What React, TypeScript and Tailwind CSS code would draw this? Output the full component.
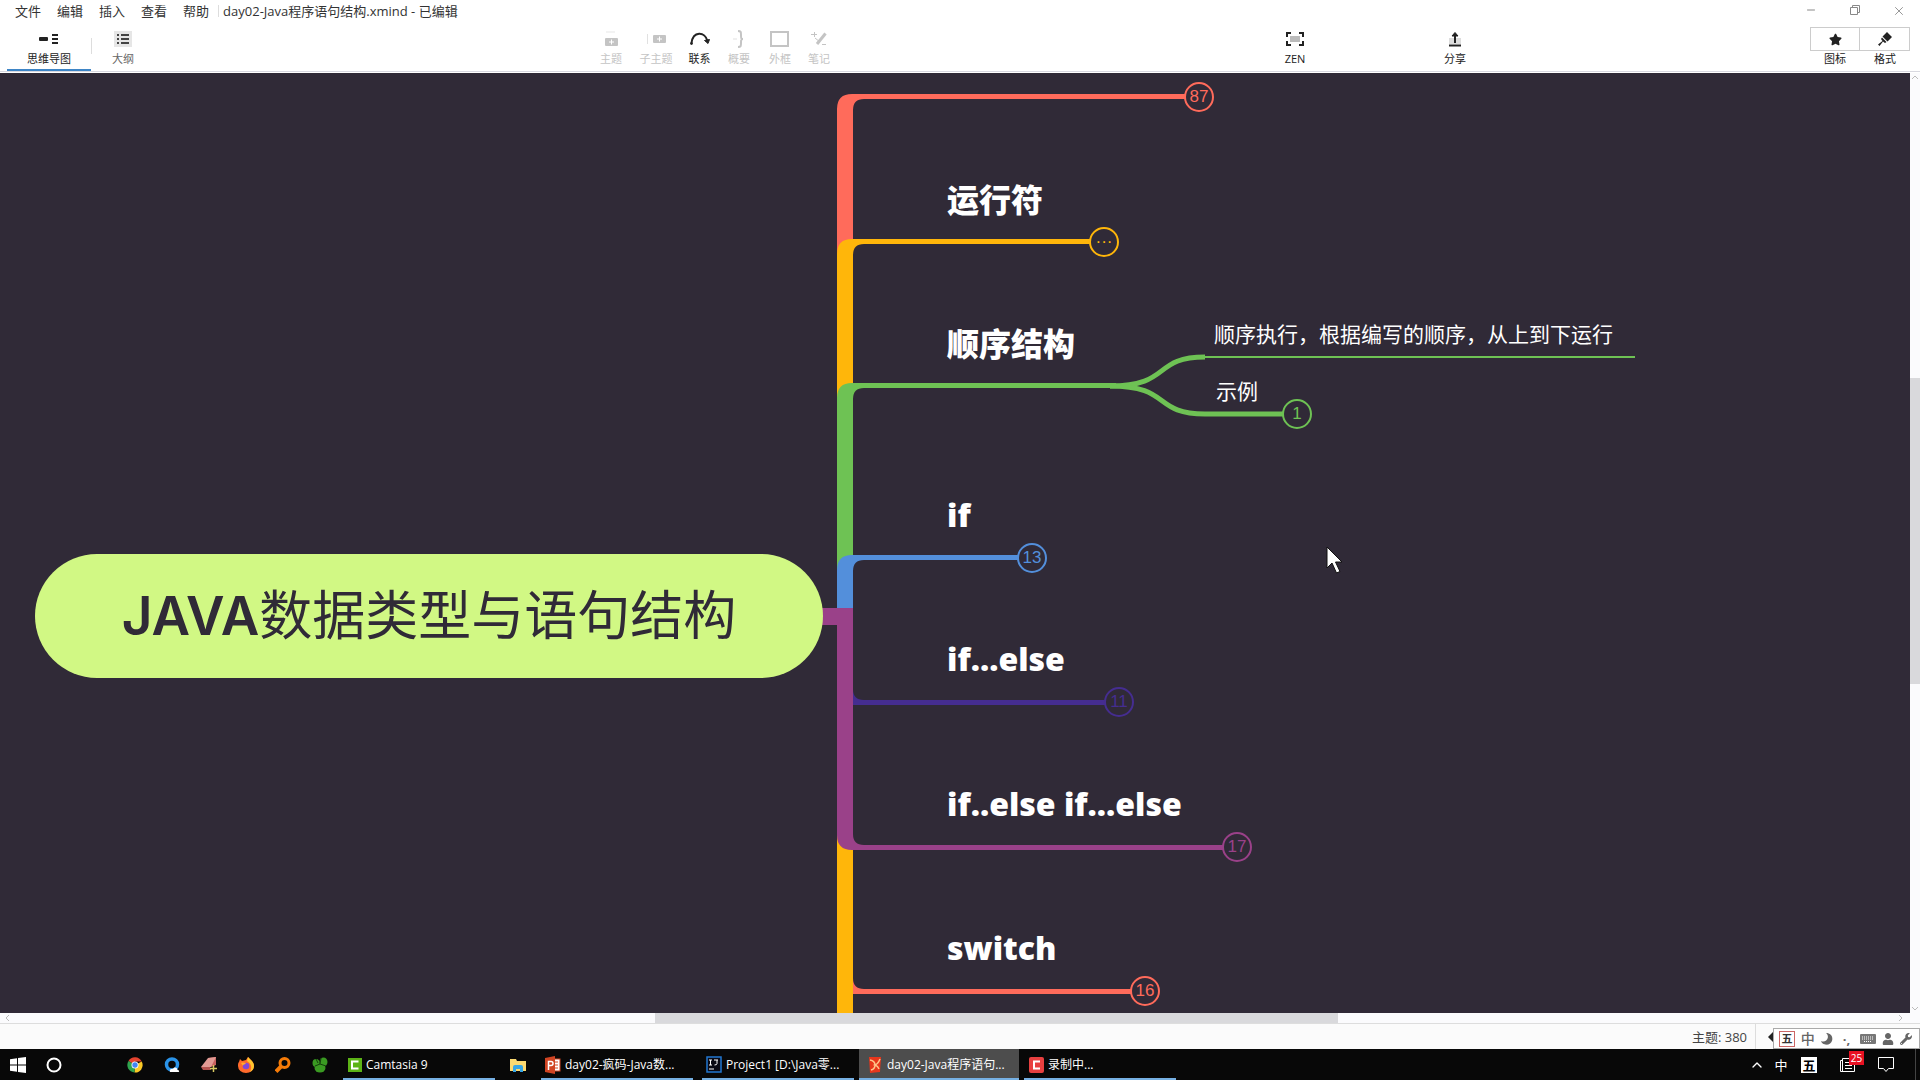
import type { ReactNode } from "react";
import { ChevronUp, Minus, X } from "lucide-react";
import { FaStar, FaWrench, FaUser, FaMoon } from "react-icons/fa";

const menus = ["文件", "编辑", "插入", "查看", "帮助"];

// y is the middle of the horizontal stroke, end is where the badge starts
const branches = [
  { color: "#ff6b5b", y: 24, end: 1185 },
  { color: "#ffb60a", y: 169, end: 1090 },
  { color: "#6ec254", y: 313, end: 1116 },
  { color: "#538fdb", y: 485, end: 1018 },
  { color: "#ff6b5b", y: 918, end: 1131 },
  { color: "#ffb60a", y: 1062, end: 1131 },
  { color: "#452d90", y: 629, end: 1105 },
  { color: "#9a4189", y: 774, end: 1223 },
];

const topics = [
  { text: "运行符", place: "left-[947px] top-[103px]" },
  { text: "顺序结构", place: "left-[947px] top-[247px]" },
  { text: "if", place: "left-[947px] top-[418px]" },
  { text: "if...else", place: "left-[947px] top-[562px]" },
  { text: "if..else if...else", place: "left-[947px] top-[707px]" },
  { text: "switch", place: "left-[947px] top-[851px]" },
];

const badges = [
  { text: "87", place: "left-[1184px] top-[9px] text-[#ff6b5b]" },
  { text: "···", place: "left-[1089px] top-[154px] text-[#ffb60a]" },
  { text: "1", place: "left-[1282px] top-[326px] text-[#6ec254]" },
  { text: "13", place: "left-[1017px] top-[470px] text-[#538fdb]" },
  { text: "11", place: "left-[1104px] top-[614px] text-[#452d90]" },
  { text: "17", place: "left-[1222px] top-[759px] text-[#9a4189]" },
  { text: "16", place: "left-[1130px] top-[903px] text-[#ff6b5b]" },
];

const ROOT_Y = 543;

function branchPath(y: number, end: number) {
  const dir = y < ROOT_Y ? 1 : -1;
  const outer = y - 3 * dir;
  const inner = y + 2 * dir;
  return `M837 ${ROOT_Y} V${outer + 15 * dir} Q837 ${outer} 852 ${outer} H${end} V${inner} H864 Q853 ${inner} 853 ${inner + 11 * dir} V${ROOT_Y} Z`;
}

function ToolButton({ label, className, children }: { label: string; className: string; children: ReactNode }) {
  return (
    <button className={`flex flex-col items-center h-full pt-[5px] ${className}`}>
      <span className="h-6 flex items-center justify-center">{children}</span>
      <span className="text-[11px] leading-4 whitespace-nowrap">{label}</span>
    </button>
  );
}

function TitleBar() {
  return (
    <header className="h-[22px] shrink-0 flex items-center pl-[15px] text-[13px] leading-4 text-[#333]">
      <nav className="flex gap-4">
        {menus.map((m) => (
          <button key={m}>{m}</button>
        ))}
      </nav>
      <span className="w-px h-3 bg-[#ddd] ml-[9px] mr-1" />
      <h1 className="whitespace-nowrap">day02-Java程序语句结构.xmind - 已编辑</h1>
      <div className="ml-auto flex text-[#888]">
        <button aria-label="最小化" className="w-11 flex justify-center">
          <Minus size={12} strokeWidth={2} />
        </button>
        <button aria-label="还原" className="w-11 flex justify-center">
          <svg width="12" height="12" fill="none" stroke="currentColor">
            <path d="M1.500 3.500h7v7h-7zM3.500 3V1.500h7v7H9" />
          </svg>
        </button>
        <button aria-label="关闭" className="w-[43px] flex justify-center">
          <X size={14} strokeWidth={1.500} />
        </button>
      </div>
    </header>
  );
}

function Toolbar() {
  return (
    <div className="h-[50px] shrink-0 flex border-b border-[#d8d8e0] mb-px pl-[7px] pr-[10px] text-[#222]">
      <ToolButton label="思维导图" className="w-[84px] border-b-2 border-[#3e85c6]">
        <svg width="20" height="12" fill="currentColor">
          <rect x="0" y="4" width="9" height="4" rx="1" />
          <path d="M13 1h6v2h-6zM13 5h6v2h-6zM13 9h6v2h-6z" />
        </svg>
      </ToolButton>
      <span className="w-px h-4 mt-4 bg-[#ddd]" />
      <ToolButton label="大纲" className="w-[62px] text-[#666]">
        <svg width="18" height="16">
          <rect width="18" height="16" fill="#e6e6e6" />
          <path d="M3 3h2v2H3zM7 3h8v2H7zM3 7h2v2H3zM7 7h8v2H7zM3 11h2v2H3zM7 11h8v2H7z" fill="#444" />
        </svg>
      </ToolButton>
      <div className="flex-[434]" />
      <ToolButton label="主题" className="w-[46px] text-[#c4c4c4]">
        <svg width="16" height="18" fill="none" stroke="currentColor">
          <path d="M3 2h9" strokeOpacity=".4" />
          <rect x="2" y="8" width="13" height="8" rx="1" fill="currentColor" stroke="none" />
          <path d="M6 12h5M8.500 9.500v5" stroke="#fff" />
        </svg>
      </ToolButton>
      <ToolButton label="子主题" className="w-[44px] text-[#c4c4c4]">
        <svg width="22" height="16" fill="none" stroke="currentColor">
          <path d="M2.500 3v10" strokeOpacity=".5" />
          <rect x="8" y="4" width="13" height="8" rx="1" fill="currentColor" stroke="none" />
          <path d="M12 8h5M14.500 5.500v5" stroke="#fff" />
        </svg>
      </ToolButton>
      <ToolButton label="联系" className="w-[43px]">
        <svg width="22" height="14" fill="none" stroke="currentColor" strokeWidth="2">
          <path d="M2.500 11C4-1 16-1 18.500 9" />
          <path d="M15.500 8.500l3.500 3 1.500-4z" fill="currentColor" strokeWidth="1" />
          <circle cx="2.500" cy="11.500" r="1" fill="currentColor" strokeWidth="1" />
        </svg>
      </ToolButton>
      <ToolButton label="概要" className="w-[36px] text-[#c4c4c4]">
        <svg width="14" height="20" fill="none" stroke="currentColor" strokeWidth="2">
          <path d="M6 2c3 0 3 1 3 4s0 4 2 4c-2 0-2 1-2 4s0 4-3 4" />
          <path d="M1 10h4" strokeWidth="1" strokeOpacity=".5" />
        </svg>
      </ToolButton>
      <ToolButton label="外框" className="w-[46px] text-[#c4c4c4]">
        <svg width="20" height="16" fill="none" stroke="currentColor" strokeWidth="2">
          <rect x="1" y="1" width="17" height="14" />
        </svg>
      </ToolButton>
      <ToolButton label="笔记" className="w-8 text-[#c4c4c4]">
        <svg width="16" height="16" fill="none" stroke="currentColor">
          <path d="M14.500 2.500L6 13" strokeWidth="3" />
          <path d="M0 3.500h6M3.500 1v5M4 7l5 4M11 13.500h4" />
        </svg>
      </ToolButton>
      <div className="flex-[440]" />
      <ToolButton label="ZEN" className="w-10">
        <svg width="20" height="14" fill="none" stroke="currentColor" strokeWidth="2">
          <rect x="5" y="4" width="10" height="6" fill="#bbb" stroke="none" />
          <path d="M6 1H2v4M14 1h4v4M2 9v4h4M18 9v4h-4" />
        </svg>
      </ToolButton>
      <div className="flex-[120]" />
      <ToolButton label="分享" className="w-10">
        <svg width="14" height="16" fill="none" stroke="currentColor" strokeWidth="2">
          <rect x="1" y="7" width="12" height="6" fill="#ddd" stroke="none" />
          <path d="M1 14.500h12M7 12V3" />
          <path d="M4 5l3-3.500L10 5z" fill="currentColor" strokeWidth="1" />
        </svg>
      </ToolButton>
      <div className="flex-[335]" />
      <div className="flex">
        <ToolButton label="图标" className="w-[50px]">
          <span className="w-[50px] h-6 border border-[#ccc] flex items-center justify-center">
            <FaStar size={13} />
          </span>
        </ToolButton>
        <ToolButton label="格式" className="w-[50px]">
          <span className="w-[50px] h-6 border border-l-0 border-[#ccc] flex items-center justify-center">
            <svg width="14" height="14" fill="currentColor">
              <path d="M9 0l5 5-4.500 4.500-5-5zM4 5.500L8.500 10 7 11 5 9.500 1.500 14 0 12.500 4.500 9 3 7z" />
            </svg>
          </span>
        </ToolButton>
      </div>
    </div>
  );
}

function MindMap() {
  return (
    <main className="relative flex-1 overflow-hidden bg-[#302a37] text-white">
      <svg className="absolute inset-0 size-full">
        {branches.map((b) => (
          <path key={b.y} d={branchPath(b.y, b.end)} fill={b.color} />
        ))}
        <path d="M820 535h33v17h-33z" fill="#9a4189" />
        <g fill="none" stroke="#6ec254">
          <path d="M1110 313C1172 313 1152 284 1205 284" strokeWidth="5" />
          <path d="M1110 313C1172 313 1152 341 1205 341H1283" strokeWidth="5" />
          <path d="M1204 284H1635" strokeWidth="2" />
        </g>
      </svg>
      <div className="absolute left-[35px] top-[481px] w-[788px] h-[124px] rounded-full bg-[#d1f884] text-[#302a37] flex items-center justify-center whitespace-nowrap text-[53px] leading-[64px]">
        <span className="font-semibold">JAVA</span>
        <span>数据类型与语句结构</span>
      </div>
      {topics.map((t) => (
        <h2
          key={t.text}
          className={`absolute whitespace-nowrap font-['Open_Sans','Noto_Sans_CJK_SC',sans-serif] text-[32px] leading-[48px] font-extrabold ${t.place}`}
        >
          {t.text}
        </h2>
      ))}
      <p className="absolute left-[1214px] top-[246px] whitespace-nowrap text-[21px] leading-8">
        顺序执行，根据编写的顺序，从上到下运行
      </p>
      <p className="absolute left-[1216px] top-[303px] whitespace-nowrap text-[21px] leading-8">示例</p>
      {badges.map((b) => (
        <button
          key={b.text}
          className={`absolute size-[30px] rounded-full border-2 border-current bg-[#302a37] flex items-center justify-center font-['Liberation_Sans',sans-serif] text-[17px] leading-5 ${b.place}`}
        >
          {b.text}
        </button>
      ))}
      <svg className="absolute left-[1326px] top-[473px]" width="20" height="30">
        <path d="M1 1v21l5-5 4.500 10 3.500-1.500L9.500 16H16z" fill="#fff" stroke="#111" strokeWidth="1" />
      </svg>
    </main>
  );
}

function Arrow({ className }: { className: string }) {
  return (
    <svg width="8" height="8" fill="none" stroke="#bbb" className={`shrink-0 ${className}`}>
      <path d="M1 6l3-3 3 3" />
    </svg>
  );
}

function StatusBar() {
  return (
    <div className="h-[26px] shrink-0 flex items-center justify-end bg-[#fbfbfb] border-t border-[#ddd] text-[13px] leading-4 text-[#444]">
      <span>主题: 380</span>
      <span className="w-px h-full bg-[#ddd] ml-2 mr-3" />
      <svg width="5" height="10">
        <path d="M5 0v10L0 5z" fill="#222" />
      </svg>
      {/* input method bar */}
      <div className="self-end w-[147px] h-[21px] bg-white border border-[#aaa] flex items-center justify-around pl-0.5 pr-1 text-[#666]">
        <span className="size-4 border border-[#c66] text-[11px] leading-[14px] text-center font-bold text-[#333]">五</span>
        <span className="text-[14px] font-medium">中</span>
        <FaMoon size={12} className="-scale-x-100 rotate-12" />
        <span className="w-4 text-center font-bold">·,</span>
        <svg width="16" height="10">
          <rect width="16" height="10" rx="1" fill="#777" />
          <path d="M2 3h12M2 5h12M4 7.500h8" stroke="#fff" strokeDasharray="1 1" />
        </svg>
        <FaUser size={12} />
        <FaWrench size={12} />
      </div>
    </div>
  );
}

function Quick({ label, className = "w-[37px]", children }: { label: string; className?: string; children: ReactNode }) {
  return (
    <button aria-label={label} className={`h-full flex items-center justify-center ${className}`}>
      {children}
    </button>
  );
}

function Task({ label, className, children }: { label: string; className: string; children: ReactNode }) {
  return (
    <button className={`h-full flex items-center gap-1 pt-0.5 border-b-2 border-[#76b0e3] whitespace-nowrap ${className}`}>
      {children}
      <span>{label}</span>
    </button>
  );
}

function Taskbar() {
  return (
    <footer className="h-[31px] shrink-0 flex items-center bg-[#080808] text-white text-[12px] leading-4">
      <Quick label="开始" className="w-9">
        <svg width="16" height="16" fill="#fff">
          <path d="M0 2.200L7 1.200V7.500H0zM8 1L16 0v7.500H8zM0 8.500h7v6.300L0 13.800zM8 8.500h8V16L8 15z" />
        </svg>
      </Quick>
      <Quick label="搜索" className="w-9 mr-11">
        <svg width="16" height="16" fill="none" stroke="#fff" strokeWidth="2">
          <circle cx="8" cy="8" r="6.500" />
        </svg>
      </Quick>
      <Quick label="Chrome">
        <svg width="16" height="16" viewBox="0 0 16 16">
          <path d="M8 8L1.500 4A7.500 7.500 0 0 1 14.700 4.500H8z" fill="#e5432f" />
          <path d="M8 8L14.700 4.500A7.500 7.500 0 0 1 7.500 15.500z" fill="#fbc926" />
          <path d="M8 8l-.5 7.500A7.500 7.500 0 0 1 1.500 4z" fill="#2fa34e" />
          <circle cx="8" cy="8" r="3.500" fill="#fff" />
          <circle cx="8" cy="8" r="2.700" fill="#4285f4" />
        </svg>
      </Quick>
      <Quick label="QQ浏览器">
        <svg width="16" height="16" viewBox="0 0 16 16">
          <circle cx="8" cy="7.500" r="5.500" fill="none" stroke="#2a93e8" strokeWidth="3.500" />
          <path d="M6 15c-1-3 2-4 3-3 1-2 4-2 4.500 1 2 0 2 2 1 2z" fill="#fff" />
        </svg>
      </Quick>
      <Quick label="画图">
        <svg width="16" height="16" viewBox="0 0 16 16">
          <path d="M7 1l8-1v8l-5 2z" fill="#c9615f" />
          <path d="M7 1l8-1-5 10H0z" fill="#e29a94" />
          <path d="M0 10h9l1 3H2z" fill="#b5534f" />
          <path d="M12.500 8v7M9 11.500h7" stroke="#d8c860" strokeWidth="1.500" />
        </svg>
      </Quick>
      <Quick label="Firefox">
        <svg width="16" height="16" viewBox="0 0 16 16">
          <path d="M1 5l1-3 2 2 4-1 2-3 3 3c2 2 3 4 3 6a8 7 0 0 1-16 0c0-2 0-3 1-4z" fill="#ff6a2b" />
          <path d="M10 0l3 3c2 2 3 4 3 6 0 3-2 5-4 6 3-6 0-9-3-11z" fill="#ffc52e" />
          <circle cx="8" cy="9" r="3.300" fill="#8148d8" />
          <path d="M3 6c2-1 3 0 5 0-1 2-3 1-3 3z" fill="#ffab2e" />
        </svg>
      </Quick>
      <Quick label="Everything">
        <svg width="16" height="16" fill="none" stroke="#f57b08">
          <circle cx="9.500" cy="6" r="4.500" strokeWidth="3" />
          <path d="M6.500 9L1 14.500" strokeWidth="4" />
        </svg>
      </Quick>
      <Quick label="螃蟹">
        <svg width="16" height="16" viewBox="0 0 16 16" fill="#3a9a22">
          <ellipse cx="4" cy="6" rx="3.500" ry="4" />
          <ellipse cx="11.500" cy="5" rx="4" ry="4.500" />
          <ellipse cx="8" cy="11" rx="5.500" ry="4.500" />
          <path d="M3 9l5-2 6 2M8 7l1-6M4 2l2 4" stroke="#14400c" fill="none" />
        </svg>
      </Quick>
      <Task label="Camtasia 9" className="w-[152px] ml-[5px] mr-[5px] pl-[5px]">
        <svg width="14" height="14">
          <rect width="14" height="14" fill="#5cb316" />
          <path d="M10.500 3.500H4v7h6.500" fill="none" stroke="#fff" strokeWidth="2" />
        </svg>
      </Task>
      <Quick label="文件资源管理器" className="w-9 mr-[5px]">
        <svg width="16" height="14">
          <path d="M0 1h6l1 2h9v10H0z" fill="#fbd971" />
          <path d="M3 14V9q0-2 2-2h6q2 0 2 2v5h-3v-3H6v3z" fill="#37a5e4" />
        </svg>
      </Quick>
      <Task label="day02-疯码-Java数..." className="w-[152px] mr-[9px] pl-1">
        <svg width="16" height="18">
          <rect x="7" y="3" width="8" height="12" fill="#fff" stroke="#d04423" />
          <path d="M10 6h3M10 9h3M10 12h3" stroke="#d04423" />
          <path d="M0 2l10-2v18L0 16z" fill="#d04423" />
          <path d="M3.500 14V5.500h2.500q2 0 2 2t-2 2H3.500" fill="none" stroke="#fff" strokeWidth="1.500" />
        </svg>
      </Task>
      <Task label="Project1 [D:\Java零..." className="w-[152px] mr-[5px] pl-1">
        <svg width="16" height="17">
          <rect x="1" y="1" width="14" height="15" fill="#0a0a14" stroke="#2277d0" strokeWidth="1.500" />
          <path d="M3 4h3M4.500 4v5M3 9h3M8 4h4M11 4v3.500q0 1.500-2.500 1.500M3 13h5" fill="none" stroke="#fff" />
        </svg>
      </Task>
      <Task label="day02-Java程序语句..." className="w-[160px] mr-[5px] pl-2 bg-[#4d4d4d]">
        <svg width="16" height="17">
          <path d="M2 1l12 0-1 15-10 1z" fill="#e8371c" />
          <path d="M3 4q5 1 5 5t-4 5M13 3q-2 5-5 6 3 1 4 4" fill="none" stroke="#ffc48a" strokeWidth="1.500" />
        </svg>
      </Task>
      <Task label="录制中..." className="w-[152px] pl-[5px]">
        <svg width="15" height="16">
          <rect width="15" height="16" rx="2" fill="#e84040" />
          <path d="M11 4.500H5v7h6" fill="none" stroke="#fff" strokeWidth="2" />
        </svg>
      </Task>
      <div className="ml-auto flex items-center h-full pr-1">
        <button aria-label="显示隐藏的图标" className="w-6">
          <ChevronUp size={16} className="mx-auto" />
        </button>
        <button className="w-6 text-[13px]">中</button>
        <button className="w-8 flex justify-center">
          <span className="size-4 bg-white text-black text-[13px] leading-4 font-bold">五</span>
        </button>
        <button aria-label="新闻" className="relative w-[43px] h-full flex items-center justify-center">
          <svg width="16" height="16" fill="none" stroke="#fff">
            <path d="M3.500 1.500h12v13h-14v-11h2zM3.500 3v11M6 5.500h5M6 8.500h7M6 11.500h7" />
          </svg>
          <span className="absolute right-1 top-0.5 w-[15px] h-[14px] bg-[#e81123] text-[10px] leading-[14px] text-center">25</span>
        </button>
        <button aria-label="通知" className="w-[36px] flex justify-center">
          <svg width="18" height="17" fill="none" stroke="#fff">
            <path d="M1.500 1.500h15v11h-5l-2.500 3-2.500-3h-5z" />
          </svg>
        </button>
        <span className="w-px h-full bg-[#444] ml-[11px]" />
      </div>
    </footer>
  );
}

export default function App() {
  return (
    <div className="h-screen flex flex-col overflow-hidden bg-white font-[Inter,'Noto_Sans_CJK_SC',sans-serif]">
      <div className="font-['Open_Sans','Noto_Sans_CJK_SC',sans-serif]">
        <TitleBar />
        <Toolbar />
      </div>
      <div className="flex-1 min-h-0 flex">
        <MindMap />
        <div className="w-[10px] flex flex-col items-center bg-[#fbfbfd]">
          <Arrow className="" />
          <div className="flex-[297]" />
          <div className="w-full flex-[306] bg-[#d9d9dc]" />
          <div className="flex-[321]" />
          <Arrow className="rotate-180" />
        </div>
      </div>
      <div className="h-[10px] shrink-0 flex items-center bg-[#fbfbfd] px-[3px] pr-[15px]">
        <Arrow className="-rotate-90" />
        <div className="flex-[644]" />
        <div className="h-full flex-[683] bg-[#d9d9dc]" />
        <div className="flex-[559]" />
        <Arrow className="rotate-90" />
      </div>
      <div className="font-['Open_Sans','Noto_Sans_CJK_SC',sans-serif]">
        <StatusBar />
        <Taskbar />
      </div>
    </div>
  );
}
